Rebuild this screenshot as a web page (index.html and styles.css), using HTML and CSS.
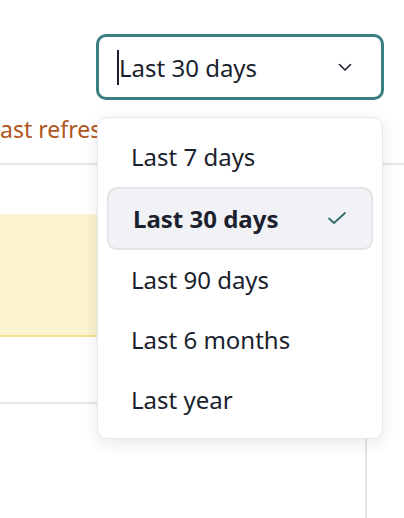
FILE: index.html
```html
<!DOCTYPE html>
<html>
<head>
<meta charset="utf-8">
<link rel="stylesheet" href="styles.css">
</head>
<body>
<div class="page">
  <div class="toolbar">
    <div class="select">
      <span class="caret"></span><span class="select-value">Last 30 days</span>
      <svg class="chevron" width="14" height="10" viewBox="0 0 14 10"><path d="M1.5 2.5 L7 8 L12.5 2.5" fill="none" stroke="#1f2433" stroke-width="1.6" stroke-linecap="round" stroke-linejoin="round"/></svg>
    </div>
  </div>
  <div class="refresh">Last refreshed 2 minutes ago</div>
  <div class="content">
    <div class="main">
      <div class="gap-top"></div>
      <div class="notice"></div>
      <div class="gap-mid"></div>
      <div class="lower"></div>
    </div>
  </div>

  <div class="menu">
    <div class="item">Last 7 days</div>
    <div class="item selected">Last 30 days
      <svg class="check" width="20" height="16" viewBox="0 0 20 16"><path d="M2 8.5 L7 13 L18 3" fill="none" stroke="#2f6b6a" stroke-width="1.8" stroke-linecap="round" stroke-linejoin="round"/></svg>
    </div>
    <div class="item">Last 90 days</div>
    <div class="item">Last 6 months</div>
    <div class="item">Last year</div>
  </div>
</div>
</body>
</html>
```
FILE: styles.css
```css
* { box-sizing: border-box; }
html, body { margin: 0; padding: 0; background: #fff; }
body {
  font-family: "Noto Sans", Lato, sans-serif;
  color: #1b1f2e;
  width: 404px;
  height: 518px;
  overflow: hidden;
}
.page { position: relative; width: 404px; height: 518px; overflow: hidden; }

.toolbar {
  display: flex;
  justify-content: flex-end;
  padding: 34px 20px 0 0;
}
.select {
  width: 288px;
  height: 66px;
  border: 3px solid #3a7f80;
  border-radius: 10px;
  display: flex;
  align-items: center;
  padding: 0 29px 0 18px;
  font-size: 24px;
  background: #fff;
}
.caret {
  width: 2px;
  height: 35px;
  background: #1b1f2e;
}
.select-value { flex: 1; }
.chevron { display: block; }

.refresh {
  margin-left: -12px;
  margin-top: 14px;
  color: #b0561f;
  font-size: 23px;
  line-height: 30px;
  white-space: nowrap;
}

.content {
  margin-top: 19px;
  display: flex;
  border-top: 2px solid #e6e6ea;
}
.main {
  width: 367px;
  border-right: 2px solid #e4e4e8;
  height: 360px;
}
.gap-top { height: 49px; }
.notice {
  height: 123px;
  background: #fcf3cf;
  border-bottom: 2px solid #f6e28c;
}
.gap-mid { height: 67px; border-bottom: 2px solid #e6e6ea; }

.menu {
  position: absolute;
  left: 97px;
  top: 117px;
  width: 286px;
  height: 322px;
  background: #fff;
  border: 1px solid #e6e7eb;
  border-radius: 10px;
  box-shadow: 0 4px 16px rgba(20, 25, 40, 0.10);
  padding: 9px 9px;
  display: flex;
  flex-direction: column;
}
.item {
  height: 60px;
  display: flex;
  align-items: center;
  padding: 0 24px 0 22px;
  font-size: 24px;
  border: 2px solid transparent;
  border-radius: 10px;
  color: #1b1f2e;
}
.item.selected {
  background: #f1f2f5;
  border-color: #e3e4e8;
  font-weight: 700;
  justify-content: space-between;
  height: 64px;
  padding-left: 24px;
}
.check { display: block; }
```
